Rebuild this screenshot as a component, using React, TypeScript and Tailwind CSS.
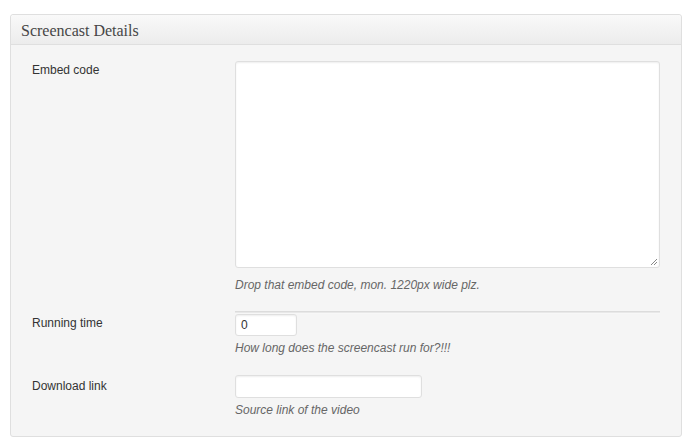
export default function App() {
  return (
    <div className="w-[691px] h-[446px] bg-white pt-[14px] pl-[10px]" style={{ fontFamily: '"Liberation Sans", Arial, sans-serif' }}>
      <div className="w-[672px] h-[423px] border border-[#dfdfdf] rounded-[3px] bg-[#f5f5f5] shadow-[inset_0_1px_0_#fff]">
        <div className="h-[30px] border-b border-[#dfdfdf] bg-gradient-to-b from-[#f9f9f9] to-[#ececec] flex items-center pl-[10px] pt-[3px] rounded-t-[3px]">
          <span className="text-[16px] text-[#464646]" style={{ fontFamily: '"Liberation Serif", Georgia, serif' }}>Screencast Details</span>
        </div>
        <div className="pt-[16px] pr-[21px]">
          <div className="flex">
            <div className="w-[224px] pl-[21px] text-[12px] text-[#333]">Embed code</div>
            <div className="flex-1">
              <div className="relative h-[207px] bg-white border border-[#dfdfdf] rounded-[3px] shadow-[inset_0_1px_2px_rgba(0,0,0,0.07)]">
                <svg className="absolute right-[1px] bottom-[1px]" width="9" height="9" viewBox="0 0 9 9">
                  <path d="M8 2 L2 8 M8 5 L5 8" stroke="#888" strokeWidth="1" />
                </svg>
              </div>
              <div className="mt-[8px] text-[12px] italic text-[#666]">Drop that embed code, mon. 1220px wide plz.</div>
            </div>
          </div>
          <div className="ml-[224px] mt-[17px] h-[3px] border-t border-[#dcdcdc] bg-[#e8e8e8] border-b border-b-[#f7f7f7]" />
          <div className="flex">
            <div className="w-[224px] pl-[21px] text-[12px] text-[#333]">Running time</div>
            <div className="flex-1">
              <div className="w-[62px] h-[22px] bg-white border border-[#dfdfdf] rounded-[3px] shadow-[inset_0_1px_2px_rgba(0,0,0,0.07)] px-[5px] text-[12px] text-[#333] flex items-center">0</div>
              <div className="mt-[3px] text-[12px] italic text-[#666]">How long does the screencast run for?!!!</div>
            </div>
          </div>
          <div className="flex mt-[18px]">
            <div className="w-[224px] pl-[21px] pt-[2px] text-[12px] text-[#333]">Download link</div>
            <div className="flex-1">
              <div className="w-[187px] h-[23px] bg-white border border-[#dfdfdf] rounded-[3px] shadow-[inset_0_1px_2px_rgba(0,0,0,0.07)]" />
              <div className="mt-[3px] text-[12px] italic text-[#666]">Source link of the video</div>
            </div>
          </div>
        </div>
      </div>
    </div>
  );
}
